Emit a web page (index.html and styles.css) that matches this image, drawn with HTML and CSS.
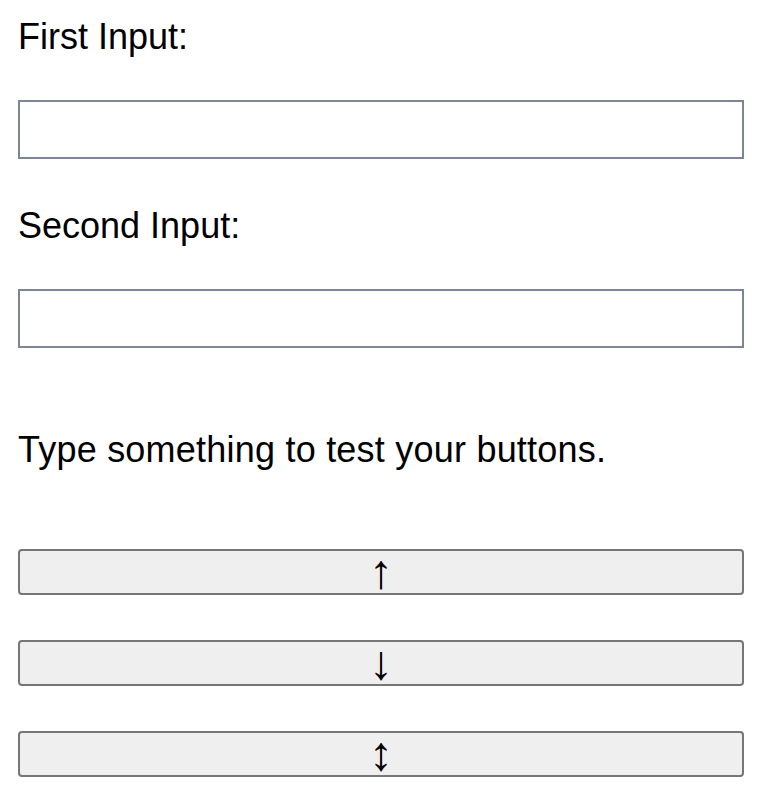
FILE: index.html
```html
<!DOCTYPE html>
<html>
<head>
<meta charset="utf-8">
<link rel="stylesheet" href="styles.css">
</head>
<body>
<main class="page">
  <label class="label label-first" for="first">First Input:</label>
  <input class="field" id="first" type="text">
  <label class="label label-second" for="second">Second Input:</label>
  <input class="field" id="second" type="text">
  <p class="hint">Type something to test your buttons.</p>
  <div class="buttons">
    <button class="btn" type="button">↑</button>
    <button class="btn" type="button">↓</button>
    <button class="btn" type="button">↕</button>
  </div>
</main>
</body>
</html>
```
FILE: styles.css
```css
html, body {
  margin: 0;
  padding: 0;
  background: #ffffff;
}
.page {
  display: flex;
  flex-direction: column;
  padding: 16px 24px 0 18px;
  font-family: "Liberation Sans", Arial, sans-serif;
  color: #000;
}
.label {
  display: block;
  font-size: 36px;
  line-height: 41px;
  height: 41px;
}
.label-second {
  margin-top: 46px;
}
.field {
  box-sizing: border-box;
  display: block;
  width: 100%;
  height: 59px;
  margin: 43px 0 0 0;
  border: 2px solid #7b8796;
  border-radius: 0;
  background: #fff;
  padding: 0 8px;
  font-size: 36px;
  font-family: inherit;
  outline: none;
}
.hint {
  margin: 81px 0 0 0;
  font-size: 36px;
  line-height: 41px;
  letter-spacing: 0.22px;
}
.buttons {
  display: flex;
  flex-direction: column;
  gap: 45px;
  margin-top: 79px;
}
.btn {
  box-sizing: border-box;
  display: block;
  width: 100%;
  height: 46px;
  margin: 0;
  padding: 0;
  border: 2px solid #767676;
  border-radius: 4px;
  background: #efefef;
  color: #000;
  font-family: "Liberation Sans", Arial, sans-serif;
  font-size: 48px;
  line-height: 42px;
  text-align: center;
}
```
